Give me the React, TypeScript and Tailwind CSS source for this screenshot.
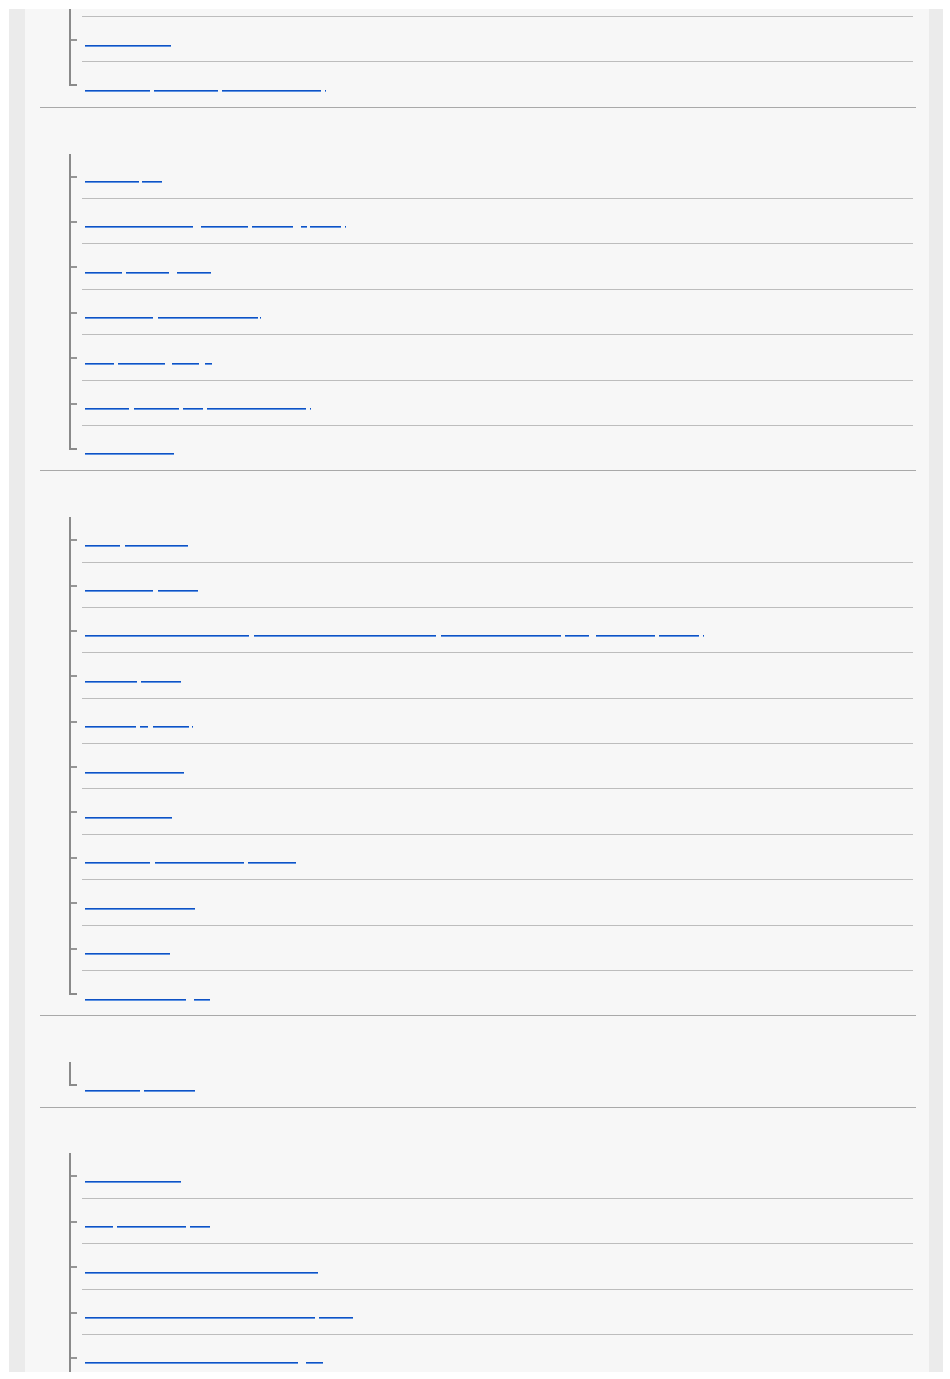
type Seg = [number, number];
type Row = Seg[];

// underline segments per link, absolute x (link starts at 85)
const SECTIONS: Row[][] = [
  [
    [[85, 160]],
    [[85, 171]],
    [[85, 150], [154, 218], [222, 321], [325, 326]],
  ],
  [
    [[85, 139], [142, 162]],
    [[85, 193], [201, 248], [252, 293], [301, 307], [310, 341], [345, 346]],
    [[85, 122], [126, 169], [177, 211]],
    [[85, 153], [158, 258], [260, 261]],
    [[85, 114], [118, 165], [172, 199], [205, 212]],
    [[85, 129], [134, 179], [183, 203], [207, 306], [310, 311]],
    [[85, 174]],
  ],
  [
    [[85, 120], [125, 188]],
    [[85, 153], [158, 198]],
    [[85, 249], [254, 436], [441, 561], [565, 589], [596, 655], [659, 699], [703, 704]],
    [[85, 137], [141, 181]],
    [[85, 136], [140, 148], [153, 189], [192, 193]],
    [[85, 184]],
    [[85, 172]],
    [[85, 150], [155, 244], [248, 296]],
    [[85, 195]],
    [[85, 170]],
    [[85, 186], [194, 210]],
  ],
  [[[85, 140], [144, 195]]],
  [
    [[85, 181]],
    [[85, 113], [117, 186], [190, 210]],
    [[85, 318]],
    [[85, 315], [319, 353]],
    [[85, 298], [306, 323]],
    [[85, 240]],
    [[85, 200]],
  ],
];

function Link({ segs }: { segs: Row }) {
  let prev = 85;
  return (
    <a href="#" className="flex items-start">
      {segs.map(([a, b], i) => {
        const gap = a - prev;
        prev = b;
        return (
          <span
            key={i}
            className="h-[2px] border-t border-[#0f52c4] bg-[#5d92e2]"
            style={{ marginLeft: gap, width: Math.max(1, b - a) }}
          />
        );
      })}
    </a>
  );
}

function TreeRow({ segs, last }: { segs: Row; last: boolean }) {
  return (
    <li className={`flex ${last ? 'h-[44.4px]' : 'h-[45.4px]'}`}>
      {last ? (
        <div className="h-[24px] w-[8px] shrink-0 self-start border-b-2 border-l-2 border-[#8a8a8a]" />
      ) : (
        <div className="w-[8px] shrink-0 border-l-2 border-[#8a8a8a]">
          <div className="h-[24px] border-b-2 border-[#959595]" />
        </div>
      )}
      <div
        className={`ml-[5px] flex-1 pl-[3px] pt-[27.5px] ${
          last ? '' : 'border-b border-[#bdbdbd]'
        }`}
      >
        <Link segs={segs} />
      </div>
    </li>
  );
}

export default function App() {
  return (
    <div className="h-[1379px] w-[950px] bg-white pl-[9px] pt-[9px] font-['Liberation_Sans',sans-serif]">
      <div className="h-[1363px] w-[934px] overflow-hidden bg-[#ebebeb] pl-[16px] pr-[14px]">
        <div className="h-full overflow-hidden bg-[#f7f7f7]">
          <div className="ml-[15px] mr-[13px] mt-[-37.4px]">
            {SECTIONS.map((rows, si) => (
              <section
                key={si}
                className={si === SECTIONS.length - 1 ? '' : 'border-b border-[#a9a9a9]'}
              >
                {si > 0 && <div className="h-[45.8px]" />}
                <ul className="pl-[29px] pr-[3px]">
                  {rows.map((segs, ri) => (
                    <TreeRow
                      key={ri}
                      segs={segs}
                      last={ri === rows.length - 1 && si !== SECTIONS.length - 1}
                    />
                  ))}
                </ul>
              </section>
            ))}
          </div>
        </div>
      </div>
    </div>
  );
}
